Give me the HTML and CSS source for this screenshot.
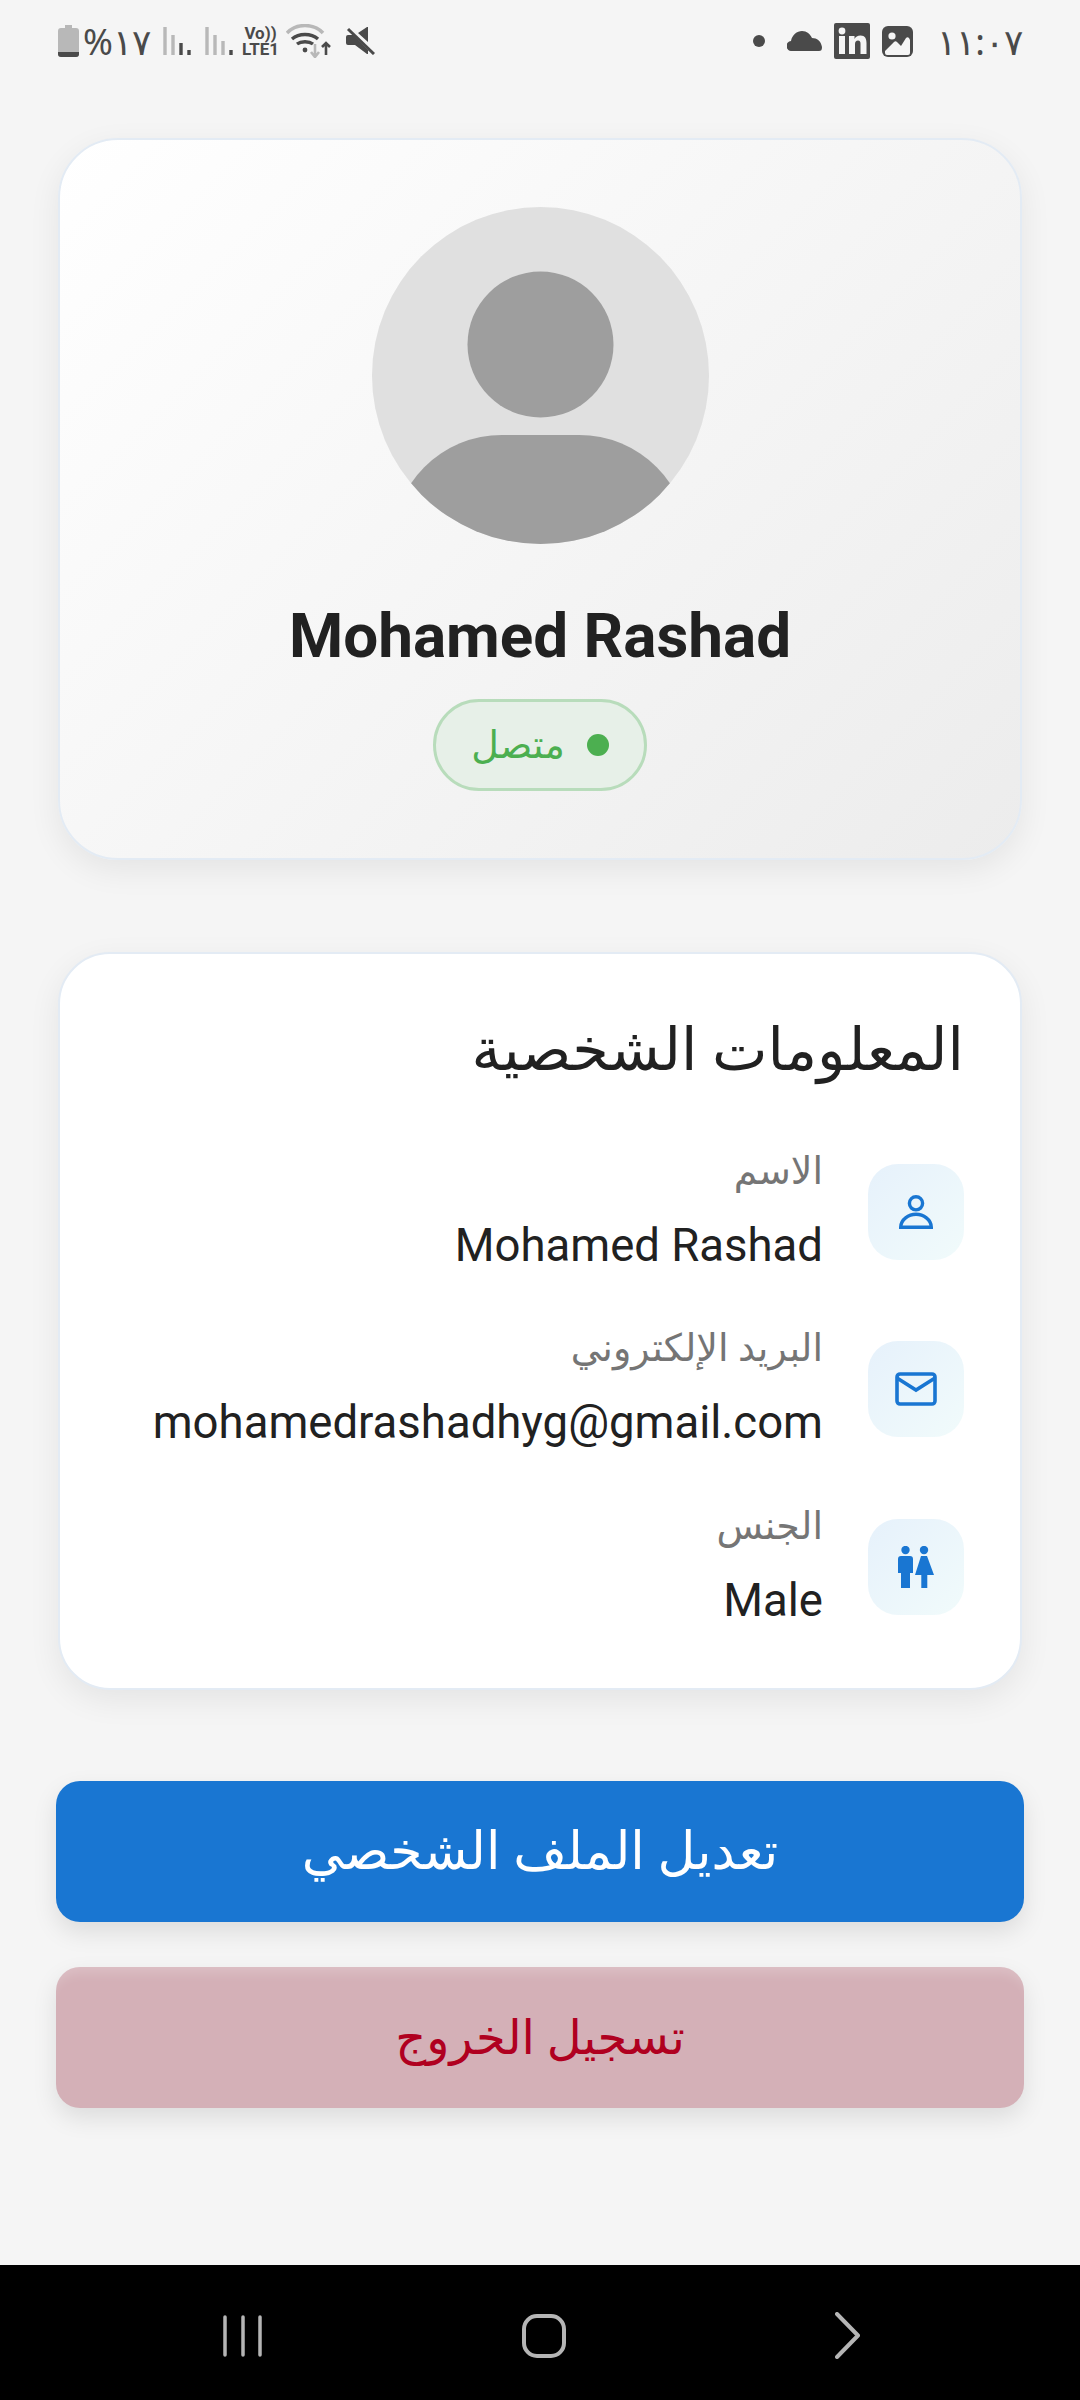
FILE: index.html
```html
<!DOCTYPE html>
<html lang="ar" dir="rtl">
<head>
    <meta charset="UTF-8">
    <meta name="viewport" content="width=device-width, initial-scale=1.0">
    <title>الملف الشخصي</title>
    <link rel="stylesheet" href="styles.css">
</head>
<body>
    <div class="phone">
        <div class="status-bar" dir="ltr">
            <div class="status-left">
                <svg width="21" height="32" viewBox="0 0 21 32"><path d="M7 0h7v3h4a3 3 0 0 1 3 3v23a3 3 0 0 1-3 3H3a3 3 0 0 1-3-3V6a3 3 0 0 1 3-3h4z" fill="#b8b8b8"/><path d="M0 27h21v2a3 3 0 0 1-3 3H3a3 3 0 0 1-3-3z" fill="#4a4a4a"/></svg>
                <span class="status-text batt-text">%١٧</span>
                <svg class="sig-first" width="28" height="28" viewBox="0 0 28 28"><path d="M2 0v28M10 8v20" stroke="#b8b8b8" stroke-width="3.400"/><path d="M18 16v12M26 23v5" stroke="#4a4a4a" stroke-width="3.400"/></svg>
                <svg class="sig-second" width="28" height="28" viewBox="0 0 28 28"><path d="M2 0v28M10 8v20M18 14v14" stroke="#b8b8b8" stroke-width="3.400"/><path d="M26 23v5" stroke="#4a4a4a" stroke-width="3.400"/></svg>
                <div class="volte"><span>Vo))</span><span>LTE1</span></div>
                <svg class="ic-wifi" width="46" height="34" viewBox="0 0 46 34" fill="none"><path d="M1 9C10-1 28-1 37 9" stroke="#b8b8b8" stroke-width="3.400"/><path d="M6 15c7-6 19-6 26 0" stroke="#4a4a4a" stroke-width="3.400"/><path d="M11 20c4-3 12-3 16 0" stroke="#4a4a4a" stroke-width="3.400"/><circle cx="19" cy="26" r="2.400" fill="#4a4a4a"/><path d="M29 20v13M25 28l4 5 4-5" stroke="#b8b8b8" stroke-width="2.600"/><path d="M40 31V19M36 23l4-4 4 4" stroke="#4a4a4a" stroke-width="2.600"/></svg>
                <svg class="ic-mute" width="29" height="28" viewBox="0 0 29 28"><path d="M0 10a2 2 0 0 1 2-2h5l15 15v4h-1L9 18H2a2 2 0 0 1-2-2zM21 0h1v15L12 6z" fill="#4a4a4a"/><path d="M2 2l26 25" stroke="#4a4a4a" stroke-width="3"/></svg>
            </div>
            <div class="status-right">
                <span class="dot-small"></span>
                <svg width="35" height="20" viewBox="0 0 35 20"><path d="M5 20a5 5 0 0 1-1-10C5 4 10 0 15 0c5 0 8 3 10 7 5 0 9 3 10 9 0 3-1 4-3 4z" fill="#4a4a4a"/></svg>
                <svg width="36" height="36" viewBox="0 0 36 36"><rect width="36" height="36" rx="2" fill="#4a4a4a"/><rect x="5" y="13" width="6" height="18" fill="#f5f5f5"/><circle cx="8" cy="8" r="3.400" fill="#f5f5f5"/><path d="M15 13h5.500v3c1-2 3-3.500 6-3.500 4.500 0 6 3 6 7.500v11h-6V21c0-2-.5-3.500-2.500-3.500S21 19 21 21v10h-6z" fill="#f5f5f5"/></svg>
                <svg width="31" height="31" viewBox="0 0 31 31"><rect width="31" height="31" rx="6" fill="#4a4a4a"/><path d="M3 25l9-9a2 2 0 0 1 3 0l4 4 5-8a2 2 0 0 1 3 0l1 2v13a2 2 0 0 1-2 2H5a2 2 0 0 1-2-2z" fill="#f5f5f5"/><circle cx="10" cy="10" r="3.600" fill="#f5f5f5"/></svg>
                <span class="status-text clock">١١:٠٧</span>
            </div>
        </div>

        <main class="content">
            <section class="card profile-card">
                <svg class="avatar" viewBox="0 0 337 337">
                    <defs><clipPath id="avatar-clip"><circle cx="168.500" cy="168.500" r="168.500"/></clipPath></defs>
                    <circle cx="168.500" cy="168.500" r="168.500" fill="#e0e0e0"/>
                    <g clip-path="url(#avatar-clip)" fill="#9e9e9e">
                        <circle cx="168.500" cy="137.500" r="73"/>
                        <rect x="20" y="228" width="297" height="220" rx="110"/>
                    </g>
                </svg>
                <h1 class="user-name" dir="ltr">Mohamed Rashad</h1>
                <div class="status-pill">
                    <span class="status-dot"></span>
                    <span>متصل</span>
                </div>
            </section>

            <section class="card info-card">
                <h2 class="info-title">المعلومات الشخصية</h2>
                <div class="info-row">
                    <div class="info-icon">
                        <svg width="34" height="34" viewBox="0 0 34 34" fill="none" stroke="#1976d2" stroke-width="3.400"><circle cx="17" cy="8.300" r="6.600"/><path d="M1.700 32.300c0-8 8-13 15.300-13s15.300 5 15.300 13z"/></svg>
                    </div>
                    <div class="info-body">
                        <div class="info-label">الاسم</div>
                        <div class="info-value">Mohamed Rashad</div>
                    </div>
                </div>
                <div class="info-row">
                    <div class="info-icon">
                        <svg width="42" height="34" viewBox="0 0 42 34" fill="none" stroke="#1976d2" stroke-width="3.600"><rect x="2" y="2" width="38" height="30" rx="3"/><path d="M2 6l19 12L40 6"/></svg>
                    </div>
                    <div class="info-body">
                        <div class="info-label">البريد الإلكتروني</div>
                        <div class="info-value">mohamedrashadhyg@gmail.com</div>
                    </div>
                </div>
                <div class="info-row">
                    <div class="info-icon">
                        <svg width="36" height="42" viewBox="0 0 36 42" fill="#1976d2"><circle cx="7.500" cy="4" r="4.200"/><circle cx="26" cy="4" r="4.200"/><path d="M3 10h9a3 3 0 0 1 3 3v14h-3v15H3V27H0V13a3 3 0 0 1 3-3z"/><path d="M23 10h6l7 19h-6.700v13h-6V29H17z"/></svg>
                    </div>
                    <div class="info-body">
                        <div class="info-label">الجنس</div>
                        <div class="info-value">Male</div>
                    </div>
                </div>
            </section>

            <div class="actions">
                <button class="btn btn-edit">تعديل الملف الشخصي</button>
                <button class="btn btn-logout">تسجيل الخروج</button>
            </div>
        </main>

        <nav class="nav-bar" dir="ltr">
            <svg width="42" height="44" viewBox="0 0 42 44" stroke="#b5b5b5" stroke-width="3.500" stroke-linecap="round"><path d="M3 3v38M21 3v38M38 3v38"/></svg>
            <svg class="nav-home" width="44" height="44" viewBox="0 0 44 44" fill="none" stroke="#b5b5b5" stroke-width="4"><rect x="2" y="2" width="40" height="40" rx="13"/></svg>
            <svg class="nav-back" width="25" height="47" viewBox="0 0 25 47" fill="none" stroke="#b5b5b5" stroke-width="4" stroke-linecap="round" stroke-linejoin="round"><path d="M2 2l21 21.500L2 45"/></svg>
        </nav>
    </div>
</body>
</html>
```

FILE: styles.css
```css
* {
    box-sizing: border-box;
}

body {
    margin: 0;
    background: #f5f5f5;
    font-family: Roboto, "Noto Sans", "DejaVu Sans", sans-serif;
    color: #212121;
}

.phone {
    width: 1080px;
    height: 2400px;
    display: flex;
    flex-direction: column;
    overflow: hidden;
}

/* status bar */
.status-bar {
    height: 80px;
    flex-shrink: 0;
    padding: 2px 59px 0 58px;
    display: flex;
    align-items: center;
    justify-content: space-between;
}

.status-left,
.status-right {
    display: flex;
    align-items: center;
}

.status-text {
    font-family: "Noto Sans", sans-serif;
    font-size: 36px;
    color: #4a4a4a;
}

.batt-text {
    margin-left: 4px;
    letter-spacing: 3px;
}

.sig-first {
    margin-left: 12px;
}

.sig-second {
    margin-left: 14px;
}

.volte {
    margin-left: 9px;
    display: flex;
    flex-direction: column;
    align-items: center;
    font-size: 17px;
    font-weight: 700;
    line-height: 16px;
    color: #4a4a4a;
}

.ic-wifi {
    margin-left: 7px;
}

.ic-mute {
    margin-left: 14px;
}

.status-right svg {
    margin-left: 12px;
}

.dot-small {
    width: 12px;
    height: 12px;
    border-radius: 50%;
    background: #4a4a4a;
    margin-right: 10px;
}

.clock {
    margin-left: 24px;
    margin-right: -2px;
    letter-spacing: 10px;
}

.content {
    flex: 1;
    padding: 58px 58px 0;
    display: flex;
    flex-direction: column;
}

/* cards */
.card {
    border: 2px solid #e3ebf4;
    box-shadow: 0 10px 32px rgba(0, 0, 0, 0.07);
}

.profile-card {
    height: 722px;
    padding-top: 67px;
    border-radius: 60px;
    display: flex;
    flex-direction: column;
    align-items: center;
    background: linear-gradient(135deg, #ffffff, #ececec);
}

.avatar {
    width: 337px;
    height: 337px;
    flex-shrink: 0;
}

.user-name {
    margin: 51px 0 0;
    font-size: 62px;
    line-height: 82px;
    font-weight: 700;
    color: #212121;
}

.status-pill {
    margin-top: 22px;
    width: 214px;
    height: 92px;
    border: 3px solid #b8dcbb;
    border-radius: 46px;
    background: #e7f0e8;
    display: flex;
    align-items: center;
    justify-content: center;
    gap: 22px;
    font-size: 38px;
    color: #4caf50;
}

.status-dot {
    width: 22px;
    height: 22px;
    border-radius: 50%;
    background: #4caf50;
}

.info-card {
    margin-top: 92px;
    height: 738px;
    padding: 61px 56px 0;
    border-radius: 52px;
    background: #fff;
}

.info-title {
    margin: 0 0 38px;
    font-size: 59px;
    line-height: 70px;
    font-weight: 400;
    color: #212121;
}

.info-row {
    height: 177.500px;
    display: flex;
    align-items: center;
    gap: 45px;
}

.info-icon {
    width: 96px;
    height: 96px;
    flex-shrink: 0;
    border-radius: 30px;
    background: linear-gradient(135deg, #e6f1fb, #f1fbfb);
    display: flex;
    align-items: center;
    justify-content: center;
}

.info-body {
    padding-bottom: 3px;
}

.info-label {
    font-size: 38px;
    line-height: 56px;
    margin-bottom: 15px;
    color: #757575;
}

.info-value {
    font-size: 45.500px;
    line-height: 64px;
    color: #212121;
    direction: ltr;
    text-align: right;
}

/* buttons */
.actions {
    margin: 91px -2px 0;
    display: flex;
    flex-direction: column;
    gap: 45px;
}

.btn {
    height: 141px;
    border: none;
    border-radius: 24px;
    font-family: inherit;
    box-shadow: 0 10px 24px rgba(0, 0, 0, 0.1);
}

.btn-edit {
    background: #1976d2;
    color: #fff;
    font-size: 52px;
}

.btn-logout {
    background: #d4b0b7;
    color: #b00020;
    font-size: 48px;
    box-shadow: inset 0 14px 12px -8px rgba(255, 255, 255, 0.2), 0 10px 24px rgba(0, 0, 0, 0.1);
}

/* bottom navigation */
.nav-bar {
    height: 135px;
    flex-shrink: 0;
    background: #000;
    padding: 6px 0 0 222px;
    display: flex;
    align-items: center;
}

.nav-home {
    margin-left: 258px;
}

.nav-back {
    margin-left: 269px;
}
```
